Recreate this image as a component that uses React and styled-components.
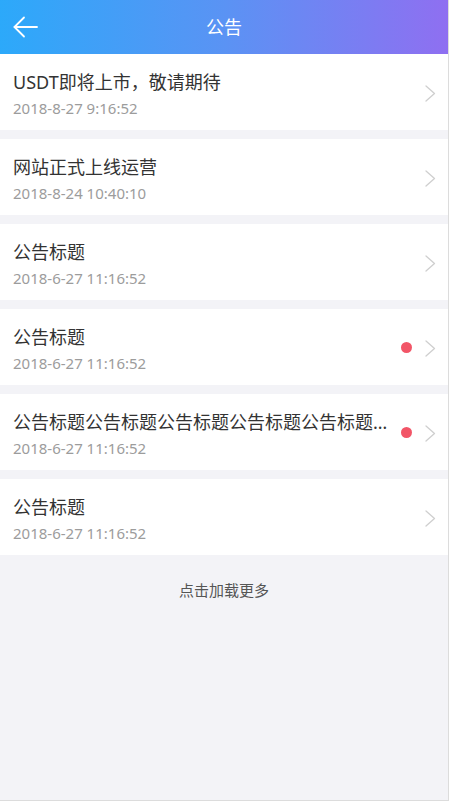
import React from "react";
import styled, { createGlobalStyle } from "styled-components";

const GlobalStyle = createGlobalStyle`
  html, body { margin: 0; padding: 0; background: #ffffff; }
  body { font-family: "Noto Sans", "Noto Sans CJK SC", sans-serif; }
  * { box-sizing: border-box; }
`;

const Page = styled.div`
  width: 449px;
  height: 801px;
  background: #f3f3f7;
  border-right: 1px solid #dcdcdc;
  border-bottom: 1px solid #dcdcdc;
  display: flex;
  flex-direction: column;
  overflow: hidden;
`;

const Header = styled.header`
  height: 54px;
  flex-shrink: 0;
  background: linear-gradient(90deg, #2ca9fa 0%, #5a93f4 50%, #8f6ff1 100%);
  display: flex;
  align-items: center;
  color: #fff;
`;

const BackButton = styled.button`
  width: 50px;
  height: 54px;
  border: 0;
  background: transparent;
  padding: 0 0 0 13px;
  display: flex;
  align-items: center;
  cursor: pointer;
`;

const HeaderTitle = styled.h1`
  flex: 1;
  margin: 0 50px 0 0;
  text-align: center;
  font-size: 18px;
  font-weight: 400;
  line-height: 54px;
  color: #fff;
`;

const List = styled.ul`
  list-style: none;
  margin: 0;
  padding: 0;
  display: flex;
  flex-direction: column;
  gap: 9px;
`;

const Item = styled.li`
  height: 76px;
  background: #fff;
  display: flex;
  align-items: center;
  padding: 0 12px 0 13px;
`;

const TextBlock = styled.div`
  flex: 1;
  min-width: 0;
  display: flex;
  flex-direction: column;
  padding-top: 3px;
  margin-right: 10px;
`;

const Title = styled.div`
  font-size: 18px;
  line-height: 24px;
  color: #333;
  white-space: nowrap;
  overflow: hidden;
  text-overflow: ellipsis;
`;

const Time = styled.div`
  font-size: 15px;
  line-height: 20px;
  margin-top: 4px;
  color: #9c9c9c;
`;

const Dot = styled.span`
  width: 11px;
  height: 11px;
  border-radius: 50%;
  background: #f25567;
  margin-right: 13px;
  flex-shrink: 0;
  margin-top: 1px;
`;

const Chevron = styled.svg`
  width: 11px;
  height: 17px;
  flex-shrink: 0;
  margin-top: 2px;
`;

const LoadMore = styled.button`
  border: 0;
  background: transparent;
  margin: 23px auto 0;
  padding: 0;
  font-family: inherit;
  font-size: 15px;
  line-height: 24px;
  color: #555;
  cursor: pointer;
`;

const items = [
  { title: "USDT即将上市，敬请期待", time: "2018-8-27 9:16:52", unread: false },
  { title: "网站正式上线运营", time: "2018-8-24 10:40:10", unread: false },
  { title: "公告标题", time: "2018-6-27 11:16:52", unread: false },
  { title: "公告标题", time: "2018-6-27 11:16:52", unread: true },
  {
    title: "公告标题公告标题公告标题公告标题公告标题公告标题公告标题",
    time: "2018-6-27 11:16:52",
    unread: true,
  },
  { title: "公告标题", time: "2018-6-27 11:16:52", unread: false },
];

export default function App() {
  return (
    <>
      <GlobalStyle />
      <Page>
        <Header>
          <BackButton aria-label="返回">
            <svg width="25" height="22" viewBox="0 0 25 22" fill="none">
              <path d="M1.5 11H24" stroke="#fff" strokeWidth="1.8" strokeLinecap="round" />
              <path d="M11 1.5L1.5 11L11 20.5" stroke="#fff" strokeWidth="1.8" strokeLinecap="round" strokeLinejoin="round" />
            </svg>
          </BackButton>
          <HeaderTitle>公告</HeaderTitle>
        </Header>
        <List>
          {items.map((it, i) => (
            <Item key={i}>
              <TextBlock>
                <Title>{it.title}</Title>
                <Time>{it.time}</Time>
              </TextBlock>
              {it.unread && <Dot />}
              <Chevron viewBox="0 0 11 17" fill="none">
                <path d="M1 1L9.5 8.5L1 16" stroke="#cfcfcf" strokeWidth="1.3" strokeLinecap="round" strokeLinejoin="round" />
              </Chevron>
            </Item>
          ))}
        </List>
        <LoadMore>点击加载更多</LoadMore>
      </Page>
    </>
  );
}
